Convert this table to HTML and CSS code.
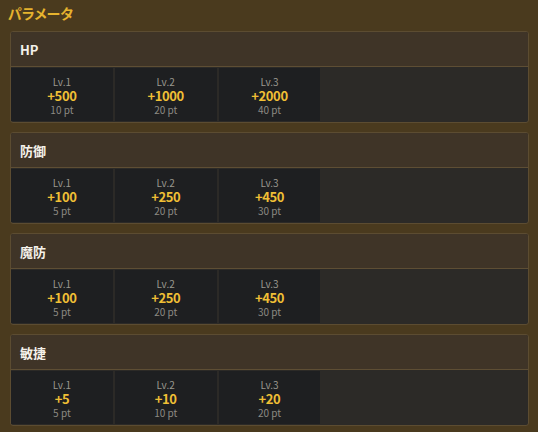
FILE: index.html
```html
<!DOCTYPE html>
<html lang="ja">
<head>
<meta charset="utf-8">
<link rel="stylesheet" href="styles.css">
</head>
<body>
<div class="page">
  <h1 class="title">パラメータ</h1>
  <section class="card">
    <div class="card-head">HP</div>
    <div class="levels">
      <div class="lv"><span class="lv-name">Lv.1</span><span class="lv-val">+500</span><span class="lv-pt">10 pt</span></div>
      <div class="lv"><span class="lv-name">Lv.2</span><span class="lv-val">+1000</span><span class="lv-pt">20 pt</span></div>
      <div class="lv"><span class="lv-name">Lv.3</span><span class="lv-val">+2000</span><span class="lv-pt">40 pt</span></div>
    </div>
  </section>
  <section class="card">
    <div class="card-head">防御</div>
    <div class="levels">
      <div class="lv"><span class="lv-name">Lv.1</span><span class="lv-val">+100</span><span class="lv-pt">5 pt</span></div>
      <div class="lv"><span class="lv-name">Lv.2</span><span class="lv-val">+250</span><span class="lv-pt">20 pt</span></div>
      <div class="lv"><span class="lv-name">Lv.3</span><span class="lv-val">+450</span><span class="lv-pt">30 pt</span></div>
    </div>
  </section>
  <section class="card">
    <div class="card-head">魔防</div>
    <div class="levels">
      <div class="lv"><span class="lv-name">Lv.1</span><span class="lv-val">+100</span><span class="lv-pt">5 pt</span></div>
      <div class="lv"><span class="lv-name">Lv.2</span><span class="lv-val">+250</span><span class="lv-pt">20 pt</span></div>
      <div class="lv"><span class="lv-name">Lv.3</span><span class="lv-val">+450</span><span class="lv-pt">30 pt</span></div>
    </div>
  </section>
  <section class="card">
    <div class="card-head">敏捷</div>
    <div class="levels">
      <div class="lv"><span class="lv-name">Lv.1</span><span class="lv-val">+5</span><span class="lv-pt">5 pt</span></div>
      <div class="lv"><span class="lv-name">Lv.2</span><span class="lv-val">+10</span><span class="lv-pt">10 pt</span></div>
      <div class="lv"><span class="lv-name">Lv.3</span><span class="lv-val">+20</span><span class="lv-pt">20 pt</span></div>
    </div>
  </section>
</div>
</body>
</html>
```
FILE: styles.css
```css
html, body {
  margin: 0;
  padding: 0;
  background: #4a3a1e;
  height: 100%;
  overflow: hidden;
}
body {
  font-family: "Noto Sans CJK JP", "Noto Sans", sans-serif;
}
.page {
  padding: 5px 9px 0 10px;
  display: flex;
  flex-direction: column;
  gap: 9px;
}
.title {
  margin: 0 0 0 -2px;
  font-size: 14px;
  line-height: 17px;
  font-weight: 700;
  color: #e6b32e;
  font-feature-settings: "palt";
}
.card {
  border: 1px solid #5c4c31;
  border-radius: 3px;
  background: #2c2a27;
  overflow: hidden;
}
.card-head {
  height: 35px;
  box-sizing: border-box;
  padding: 0 9px;
  display: flex;
  align-items: center;
  background: #3f3427;
  border-bottom: 1px solid #5e4e34;
  color: #f4f1ea;
  font-weight: 700;
  font-size: 13px;
}
.levels {
  display: grid;
  grid-template-columns: repeat(5, 1fr);
  gap: 2px;
  padding: 1px 0 1px 0;
}
.lv {
  background: #1e1f21;
  height: 53px;
  display: flex;
  flex-direction: column;
  align-items: center;
  justify-content: center;
  padding-top: 3px;
  box-sizing: border-box;
}
.lv-name {
  font-size: 10px;
  line-height: 14px;
  color: #9a978f;
}
.lv-val {
  font-size: 13px;
  line-height: 14px;
  font-weight: 700;
  color: #f0bf35;
  letter-spacing: -0.4px;
}
.lv-pt {
  font-size: 10px;
  line-height: 14px;
  color: #8d8a83;
}
```
